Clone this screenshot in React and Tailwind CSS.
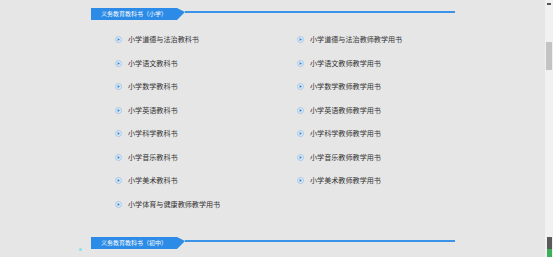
import React from "react";

const left = [
  "小学道德与法治教科书",
  "小学语文教科书",
  "小学数学教科书",
  "小学英语教科书",
  "小学科学教科书",
  "小学音乐教科书",
  "小学美术教科书",
  "小学体育与健康教师教学用书",
];

const right = [
  "小学道德与法治教师教学用书",
  "小学语文教师教学用书",
  "小学数学教师教学用书",
  "小学英语教师教学用书",
  "小学科学教师教学用书",
  "小学音乐教师教学用书",
  "小学美术教师教学用书",
];

const Bullet = () => (
  <svg width="7" height="7" viewBox="0 0 7 7" className="shrink-0">
    <circle cx="3.5" cy="3.5" r="3" fill="#dde9f4" stroke="#9cc2e4" strokeWidth="0.8" />
    <polygon points="2.6,2 5,3.5 2.6,5" fill="#2f86d8" />
  </svg>
);

const SectionHeader = ({ title }) => (
  <div className="flex items-start w-[364px] h-[12px]">
    <div className="w-[86px] h-[12px] bg-[#2b8be6] text-white text-[6px] leading-[12px] pl-[10px] whitespace-nowrap overflow-hidden">
      {title}
    </div>
    <svg width="8" height="12" viewBox="0 0 8 12" className="shrink-0">
      <polygon points="0,0 8,4 0,12" fill="#2b8be6" />
    </svg>
    <div className="flex-1 h-[2px] mt-[3px] bg-[#3b93e8]" />
  </div>
);

const Item = ({ text }) => (
  <div className="flex items-center gap-[6px] h-[23.5px] text-[7.1px] text-[#333]">
    <Bullet />
    <span className="whitespace-nowrap">{text}</span>
  </div>
);

export default function App() {
  return (
    <div
      className="flex w-[553px] h-[257px] overflow-hidden bg-[#e6e6e6]"
      style={{ fontFamily: '"Noto Sans CJK SC", "Noto Sans", sans-serif' }}
    >
      <div className="relative flex-1 pl-[91px] pt-[8px]">
        <SectionHeader title="义务教育教科书（小学）" />
        <div className="grid grid-cols-[182px_182px] pl-[24px] mt-[8px]">
          <div className="flex flex-col">
            {left.map((t) => (
              <Item key={t} text={t} />
            ))}
          </div>
          <div className="flex flex-col">
            {right.map((t) => (
              <Item key={t} text={t} />
            ))}
          </div>
        </div>
        <div className="mt-[21px]">
          <SectionHeader title="义务教育教科书（初中）" />
        </div>
        <div className="absolute left-[79px] top-[248px] w-[3px] h-[3px] rounded-full bg-[#7fe3f0]" />
      </div>
      <div className="relative w-[8px] bg-[#f1f1f1]">
        <div className="absolute left-[2px] top-[3px] w-[4px] h-[2px] bg-[#555]" />
        <div className="absolute left-[1px] top-[42px] w-[6px] h-[28px] bg-[#c3c3c3]" />
        <div className="absolute left-[2px] top-[237px] w-[5px] h-[20px] bg-[#5a5a5a]" />
        <div className="absolute left-[2px] top-[249px] w-[5px] h-[8px] bg-[#3fae5a]" />
      </div>
    </div>
  );
}
